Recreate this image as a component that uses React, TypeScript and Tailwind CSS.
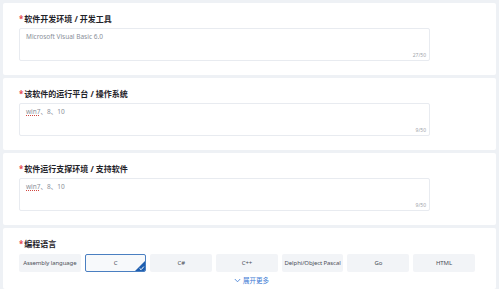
import React from "react";

const font = { fontFamily: '"Noto Sans", "Noto Sans CJK SC", sans-serif' };

function Field({ label, value, count, win }: { label: string; value?: string; count: string; win?: boolean }) {
  return (
    <div className="bg-white rounded-[2px] h-[72px] pt-[10px] pl-[16px]">
      <div className="flex items-center h-[12px] text-[8px] font-bold text-[#1f2329]">
        <span className="text-[#e5484d] mr-[1px] text-[8px]">*</span>
        <span>{label}</span>
      </div>
      <div className="relative mt-[3px] w-[411px] h-[33px] border border-[#e8ebf0] rounded-[2px]">
        <div className="pl-[6px] pt-[3px] text-[6.5px] leading-[10px] text-[#8a8f99]">
          {win ? (
            <span>
              <span className="underline decoration-[#d0453f] decoration-dotted underline-offset-[1px]">win7</span>、8、10
            </span>
          ) : (
            value
          )}
        </div>
        <div className="absolute right-[3px] bottom-[1px] text-[5px] text-[#a0a4ab]">{count}</div>
      </div>
    </div>
  );
}

const langs = ["Assembly language", "C", "C#", "C++", "Delphi/Object Pascal", "Go", "HTML"];

export default function App() {
  return (
    <div className="w-[499px] h-[289px] overflow-hidden bg-[#eef1f5] px-[3px] pt-[3px] flex flex-col gap-[3px]" style={font}>
      <Field label="软件开发环境 / 开发工具" value="Microsoft Visual Basic 6.0" count="27/50" />
      <Field label="该软件的运行平台 / 操作系统" count="9/50" win />
      <Field label="软件运行支撑环境 / 支持软件" count="9/50" win />
      <div className="bg-white rounded-[2px] flex-1 pt-[10px] pl-[16px]">
        <div className="flex items-center h-[12px] text-[8px] font-bold text-[#1f2329]">
          <span className="text-[#e5484d] mr-[1px]">*</span>
          <span>编程语言</span>
        </div>
        <div className="flex gap-[4px] mt-[4px]">
          {langs.map((l) =>
            l === "C" ? (
              <div
                key={l}
                className="relative w-[61.7px] h-[18px] flex items-center justify-center text-[6px] text-[#4b4f57] bg-[#f7f9fb] border border-[#4a7fc1] rounded-[2px] overflow-hidden"
              >
                {l}
                <svg className="absolute right-0 bottom-0" width="10" height="10" viewBox="0 0 10 10">
                  <path d="M10 0 L10 10 L0 10 Z" fill="#1f5fb0" />
                  <path d="M4.6 7.4 L6.1 8.7 L8.8 5.6" stroke="#fff" strokeWidth="1" fill="none" />
                </svg>
              </div>
            ) : (
              <div
                key={l}
                className="w-[61.7px] h-[18px] flex items-center justify-center text-[6px] tracking-[-0.1px] text-[#4b4f57] bg-[#f2f4f7] rounded-[2px] whitespace-nowrap"
              >
                {l}
              </div>
            )
          )}
        </div>
        <div className="flex items-center justify-center mt-[4px] pr-[12px] text-[6.5px] text-[#3a78d4]">
          <svg width="7" height="5" viewBox="0 0 7 5" className="mr-[2px]">
            <path d="M0.8 1 L3.5 3.8 L6.2 1" stroke="#3a78d4" strokeWidth="0.8" fill="none" />
          </svg>
          展开更多
        </div>
      </div>
    </div>
  );
}
